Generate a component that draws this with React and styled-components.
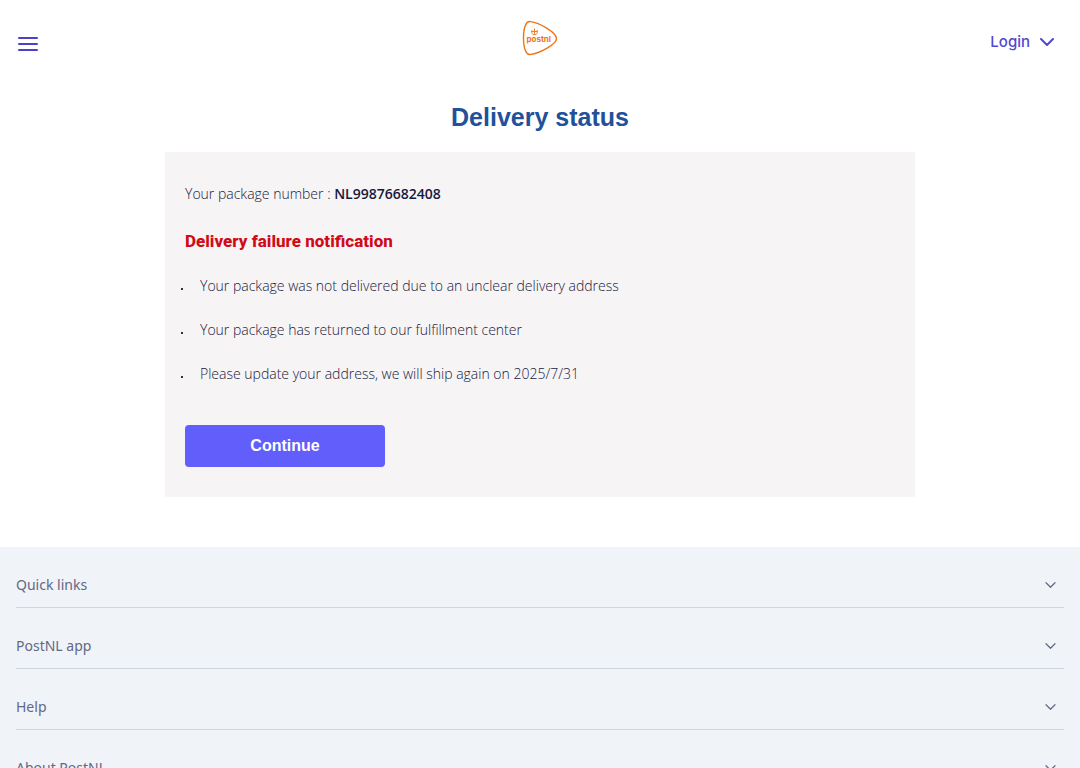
import React, { Component } from 'react';
import styled, { createGlobalStyle } from 'styled-components';

const GlobalStyle = createGlobalStyle`
    * {
        box-sizing: border-box;
    }
    html {
        scrollbar-width: none;
    }
    body {
        margin: 0;
        background: #fff;
        color: #171a3c;
        font-family: "Open Sans", "Noto Sans", sans-serif;
        font-size: 14px;
        line-height: 24px;
    }
`;

const Page = styled.div`
    display: flex;
    flex-direction: column;
    min-height: 100vh;
`;

const Header = styled.header`
    display: grid;
    grid-template-columns: 1fr auto 1fr;
    align-items: center;
    padding: 19px 16px;
`;

const MenuButton = styled.button`
    display: flex;
    justify-self: start;
    padding: 12px 0 0;
    border: 0;
    background: none;
    color: #4b42c9;
`;

const LoginButton = styled.button`
    display: flex;
    align-items: center;
    justify-self: end;
    gap: 10px;
    padding: 8px 10px 0 0;
    border: 0;
    background: none;
    color: #5049d2;
    font-family: Inter, sans-serif;
    font-size: 15px;
    font-weight: 500;
    line-height: 24px;
`;

const Main = styled.main`
    width: 100%;
    max-width: 750px;
    margin: 0 auto;
    padding: 24px 0 50px;
`;

const PageTitle = styled.h1`
    margin: 0 0 18px;
    color: #21519b;
    font-family: "Liberation Sans", Arial, sans-serif;
    font-size: 25px;
    font-weight: 700;
    line-height: 34px;
    text-align: center;
`;

const Card = styled.section`
    padding: 30px 20px;
    background: #f6f4f5;
`;

const PackageNumber = styled.p`
    margin: 0 0 22px;
    font-weight: 300;

    strong {
        font-weight: 600;
    }
`;

const FailureTitle = styled.h2`
    margin: 0 0 20px;
    color: #d10a18;
    font-family: Roboto, sans-serif;
    font-size: 17px;
    font-weight: 800;
    line-height: 26px;
`;

const ReasonList = styled.ul`
    display: flex;
    flex-direction: column;
    gap: 20px;
    margin: 0 0 39px;
    padding: 0 0 0 15px;
    list-style: none;
`;

const Reason = styled.li`
    position: relative;
    font-weight: 300;

    &::before {
        content: '';
        position: absolute;
        top: 14px;
        left: -19px;
        width: 2px;
        height: 2px;
        background: #2b2d4b;
    }
`;

const ContinueButton = styled.button`
    display: block;
    width: 200px;
    height: 42px;
    border: 0;
    border-radius: 4px;
    background: #615efc;
    color: #fff;
    font-family: "Liberation Sans", Arial, sans-serif;
    font-size: 16px;
    font-weight: 700;
`;

const Footer = styled.footer`
    flex-grow: 1;
    padding: 0 16px;
    background: #f0f3f7;
`;

const FooterButton = styled.button`
    display: flex;
    align-items: center;
    justify-content: space-between;
    width: 100%;
    padding: 26px 8px 10px 0;
    border: 0;
    border-bottom: 1px solid #cfd6df;
    background: none;
    color: #636885;
    font-family: "Noto Sans", sans-serif;
    font-size: 14px;
    line-height: 24px;
`;

const Chevron = ({ width, height, stroke }) => (
    <svg width={width} height={height} viewBox="0 0 14 8" fill="none" aria-hidden="true">
        <path d="M1 1l6 6 6-6" stroke="currentColor" strokeWidth={stroke} strokeLinecap="round" strokeLinejoin="round" />
    </svg>
);

const MenuIcon = () => (
    <svg width="24" height="16" viewBox="0 0 24 16" fill="none" aria-hidden="true">
        <path d="M3 2h18M3 8h18M3 14h18" stroke="currentColor" strokeWidth="2" strokeLinecap="round" />
    </svg>
);

const Logo = () => (
    <svg width="36" height="38" viewBox="0 -1 36 38" role="img" aria-label="PostNL">
        <path
            d="M8.6 1.6C4.4 .4 1.5 7 1.5 18s2.9 17.6 7.1 16.4C17 33.6 34.5 24.5 34.5 18.5S17 2.4 8.6 1.6Z"
            fill="#fff"
            stroke="#ee7414"
            strokeWidth="1.4"
        />
        <path
            d="M10 10c-.6 2-.2 3.8 1 4.6h3c1.2-.8 1.6-2.6 1-4.6M12.5 8.5v6M9.5 11.5h6"
            fill="none"
            stroke="#ee7414"
            strokeWidth=".9"
        />
        <text x="4.5" y="21.5" fill="#ee7414" fontFamily="Inter, sans-serif" fontSize="8" fontWeight="700">
            postnl
        </text>
    </svg>
);

class App extends Component {

  render() {
    const reasons = [
        'Your package was not delivered due to an unclear delivery address',
        'Your package has returned to our fulfillment center',
        'Please update your address, we will ship again on 2025/7/31',
    ];
    const footerItems = ['Quick links', 'PostNL app', 'Help', 'About PostNL'];

    return (
    <Page>
        <GlobalStyle />
        <Header>
            <MenuButton type="button" aria-label="Menu">
                <MenuIcon />
            </MenuButton>
            <Logo />
            <LoginButton type="button">
                Login
                <Chevron width={14} height={8} stroke={2} />
            </LoginButton>
        </Header>
        <Main>
            <PageTitle>Delivery status</PageTitle>
            <Card>
                <PackageNumber>Your package number : <strong>NL99876682408</strong></PackageNumber>
                <FailureTitle>Delivery failure notification</FailureTitle>
                <ReasonList>
                    {reasons.map(reason => <Reason key={reason}>{reason}</Reason>)}
                </ReasonList>
                <ContinueButton type="button">Continue</ContinueButton>
            </Card>
        </Main>
        <Footer>
            {footerItems.map(item => (
                <FooterButton key={item} type="button">
                    {item}
                    <Chevron width={11} height={6} stroke={1.6} />
                </FooterButton>
            ))}
        </Footer>
    </Page>
    );
  }
}

export default App;
